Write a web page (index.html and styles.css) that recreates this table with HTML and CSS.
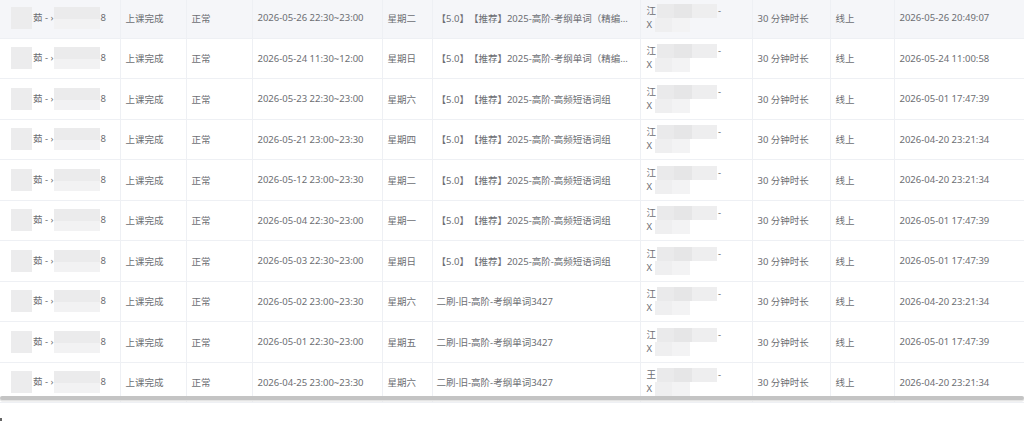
FILE: index.html
```html
<!DOCTYPE html>
<html lang="zh-CN">
<head>
<meta charset="utf-8">
<title>课程记录</title>
<link rel="stylesheet" href="styles.css">
</head>
<body>
<div class="wrap">
  <table class="grid">
    <colgroup>
      <col class="c1"><col class="c2"><col class="c3"><col class="c4"><col class="c5">
      <col class="c6"><col class="c7"><col class="c8"><col class="c9"><col class="c10">
    </colgroup>
    <tbody>
      <tr class="hover">
        <td class="stu"><span class="bl a"></span>茹 - ›<span class="bl b"></span>8</td>
        <td>上课完成</td><td>正常</td><td>2026-05-26 22:30~23:00</td><td>星期二</td>
        <td class="title">【5.0】【推荐】2025-高阶-考纲单词（精编...</td>
        <td class="tch"><div class="ln"><span>江</span><span class="bk w1"></span><span>-</span></div><div class="ln"><span>X</span><span class="bk w2"></span></div></td>
        <td>30 分钟时长</td><td>线上</td><td>2026-05-26 20:49:07</td>
      </tr>
      <tr>
        <td class="stu"><span class="bl a"></span>茹 - ›<span class="bl b"></span>8</td>
        <td>上课完成</td><td>正常</td><td>2026-05-24 11:30~12:00</td><td>星期日</td>
        <td class="title">【5.0】【推荐】2025-高阶-考纲单词（精编...</td>
        <td class="tch"><div class="ln"><span>江</span><span class="bk w1"></span><span>-</span></div><div class="ln"><span>X</span><span class="bk w2"></span></div></td>
        <td>30 分钟时长</td><td>线上</td><td>2026-05-24 11:00:58</td>
      </tr>
      <tr>
        <td class="stu"><span class="bl a"></span>茹 - ›<span class="bl b"></span>8</td>
        <td>上课完成</td><td>正常</td><td>2026-05-23 22:30~23:00</td><td>星期六</td>
        <td class="title">【5.0】【推荐】2025-高阶-高频短语词组</td>
        <td class="tch"><div class="ln"><span>江</span><span class="bk w1"></span><span>-</span></div><div class="ln"><span>X</span><span class="bk w2"></span></div></td>
        <td>30 分钟时长</td><td>线上</td><td>2026-05-01 17:47:39</td>
      </tr>
      <tr>
        <td class="stu"><span class="bl a"></span>茹 - ›<span class="bl b"></span>8</td>
        <td>上课完成</td><td>正常</td><td>2026-05-21 23:00~23:30</td><td>星期四</td>
        <td class="title">【5.0】【推荐】2025-高阶-高频短语词组</td>
        <td class="tch"><div class="ln"><span>江</span><span class="bk w1"></span><span>-</span></div><div class="ln"><span>X</span><span class="bk w2"></span></div></td>
        <td>30 分钟时长</td><td>线上</td><td>2026-04-20 23:21:34</td>
      </tr>
      <tr>
        <td class="stu"><span class="bl a"></span>茹 - ›<span class="bl b"></span>8</td>
        <td>上课完成</td><td>正常</td><td>2026-05-12 23:00~23:30</td><td>星期二</td>
        <td class="title">【5.0】【推荐】2025-高阶-高频短语词组</td>
        <td class="tch"><div class="ln"><span>江</span><span class="bk w1"></span><span>-</span></div><div class="ln"><span>X</span><span class="bk w2"></span></div></td>
        <td>30 分钟时长</td><td>线上</td><td>2026-04-20 23:21:34</td>
      </tr>
      <tr>
        <td class="stu"><span class="bl a"></span>茹 - ›<span class="bl b"></span>8</td>
        <td>上课完成</td><td>正常</td><td>2026-05-04 22:30~23:00</td><td>星期一</td>
        <td class="title">【5.0】【推荐】2025-高阶-高频短语词组</td>
        <td class="tch"><div class="ln"><span>江</span><span class="bk w1"></span><span>-</span></div><div class="ln"><span>X</span><span class="bk w2"></span></div></td>
        <td>30 分钟时长</td><td>线上</td><td>2026-05-01 17:47:39</td>
      </tr>
      <tr>
        <td class="stu"><span class="bl a"></span>茹 - ›<span class="bl b"></span>8</td>
        <td>上课完成</td><td>正常</td><td>2026-05-03 22:30~23:00</td><td>星期日</td>
        <td class="title">【5.0】【推荐】2025-高阶-高频短语词组</td>
        <td class="tch"><div class="ln"><span>江</span><span class="bk w1"></span><span>-</span></div><div class="ln"><span>X</span><span class="bk w2"></span></div></td>
        <td>30 分钟时长</td><td>线上</td><td>2026-05-01 17:47:39</td>
      </tr>
      <tr>
        <td class="stu"><span class="bl a"></span>茹 - ›<span class="bl b"></span>8</td>
        <td>上课完成</td><td>正常</td><td>2026-05-02 23:00~23:30</td><td>星期六</td>
        <td class="title">二刷-旧-高阶-考纲单词3427</td>
        <td class="tch"><div class="ln"><span>江</span><span class="bk w1"></span><span>-</span></div><div class="ln"><span>X</span><span class="bk w2"></span></div></td>
        <td>30 分钟时长</td><td>线上</td><td>2026-04-20 23:21:34</td>
      </tr>
      <tr>
        <td class="stu"><span class="bl a"></span>茹 - ›<span class="bl b"></span>8</td>
        <td>上课完成</td><td>正常</td><td>2026-05-01 22:30~23:00</td><td>星期五</td>
        <td class="title">二刷-旧-高阶-考纲单词3427</td>
        <td class="tch"><div class="ln"><span>江</span><span class="bk w1"></span><span>-</span></div><div class="ln"><span>X</span><span class="bk w2"></span></div></td>
        <td>30 分钟时长</td><td>线上</td><td>2026-05-01 17:47:39</td>
      </tr>
      <tr>
        <td class="stu"><span class="bl a"></span>茹 - ›<span class="bl b"></span>8</td>
        <td>上课完成</td><td>正常</td><td>2026-04-25 23:00~23:30</td><td>星期六</td>
        <td class="title">二刷-旧-高阶-考纲单词3427</td>
        <td class="tch"><div class="ln"><span>王</span><span class="bk w1"></span><span>-</span></div><div class="ln"><span>X</span><span class="bk w2"></span></div></td>
        <td>30 分钟时长</td><td>线上</td><td>2026-04-20 23:21:34</td>
      </tr>
    </tbody>
  </table>
  <div class="hscroll"></div>
</div>
<div class="mark"></div>
</body>
</html>
```

FILE: styles.css
```css
html, body {
  margin: 0;
  padding: 0;
  background: #fff;
  overflow: hidden;
}
body {
  width: 1024px;
  height: 422px;
  font-family: "Noto Sans", "Noto Sans CJK SC", sans-serif;
  font-size: 9.5px;
  color: #6c6e73;
  text-spacing-trim: space-all;
}
.wrap {
  position: relative;
  margin-top: -2.5px;
  width: 1024px;
  height: 405px;
  overflow: hidden;
}
.grid {
  border-collapse: collapse;
  table-layout: fixed;
  width: 1034px;
}
.c1 { width: 120px; }
.c2 { width: 66px; }
.c3 { width: 66px; }
.c4 { width: 130px; }
.c5 { width: 50px; }
.c6 { width: 208px; }
.c7 { width: 112px; }
.c8 { width: 78px; }
.c9 { width: 64px; }
.c10 { width: 140px; }
.grid td {
  height: 40.5px;
  box-sizing: border-box;
  padding: 0 5px;
  border-bottom: 1px solid #eef0f4;
  border-right: 1px solid #eef0f4;
  white-space: nowrap;
  overflow: hidden;
  text-overflow: ellipsis;
  vertical-align: middle;
}
.hover td { background: #f5f6f9; }
.grid td.stu { padding-left: 11px; }
.grid td.title { padding-left: 4px; }
.bl {
  display: inline-block;
  vertical-align: middle;
  height: 22px;
  background: #ececed;
}
.bl.a { width: 21px; margin-right: 1px; }
.bl.b { width: 46px; margin-left: 1px; background: linear-gradient(#ebebec 0 55%, #f2f2f3 55%); }
.grid td.tch { line-height: 14px; padding-left: 6px; overflow: visible; }
.ln { display: flex; align-items: center; height: 14px; }
.bk { display: inline-block; height: 14px; }
.bk.w1 { width: 60px; margin: 0 1px 0 1px; background: linear-gradient(90deg, #eaeaeb 0 28%, #e6e6e7 28% 58%, #eeeeef 58%); }
.bk.w2 { width: 35px; margin-left: 3px; background: linear-gradient(90deg, #efeff0 0 50%, #f3f3f4 50%); }
.hscroll {
  position: absolute;
  left: 0;
  top: 398.5px;
  width: 1024px;
  height: 3.5px;
  border-radius: 2px;
  background: #c4c4c4;
  box-shadow: 0 1.5px 0 #e4e4e4;
}
.mark {
  margin-top: 15px;
  width: 2px;
  height: 3px;
  background: #666;
}
```
